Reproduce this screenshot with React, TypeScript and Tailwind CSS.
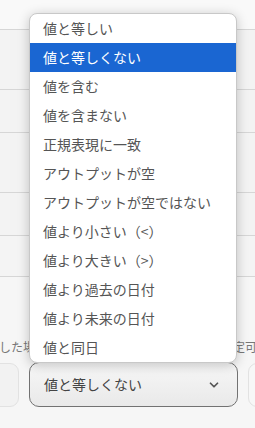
import { ChevronDown } from 'lucide-react';

const options = [
  '値と等しい',
  '値と等しくない',
  '値を含む',
  '値を含まない',
  '正規表現に一致',
  'アウトプットが空',
  'アウトプットが空ではない',
  '値より小さい（<）',
  '値より大きい（>）',
  '値より過去の日付',
  '値より未来の日付',
  '値と同日',
];

const selected = '値と等しくない';

export default function App() {
  return (
    <div
      className="relative w-[255px] h-[428px] overflow-hidden bg-[#f6f6f6] text-[#555]"
      style={{ fontFamily: '"Noto Sans CJK JP", "Noto Sans", sans-serif' }}
    >
      {/* table rows behind the menu */}
      <div className="flex flex-col">
        <div className="h-[30px] border-b border-[#d6d6d6] bg-[#f9f9f9]" />
        <div className="h-[60px] border-b border-[#d6d6d6] bg-[#f3f3f3]" />
        <div className="h-[43px] border-b border-[#d6d6d6] bg-[#f3f3f3]" />
        <div className="h-[60px] border-b border-[#d6d6d6] bg-[#f3f3f3]" />
        <div className="h-[43px] border-b border-[#d6d6d6] bg-[#f3f3f3]" />
        <div className="h-[41px] border-b border-[#d6d6d6] bg-[#f4f4f4]" />
      </div>

      {/* labels */}
      <div className="mt-[62px] flex justify-between text-[12px] leading-[16px] text-[#777]">
        <span className="-ml-[1px]">した場</span>
        <span className="mr-[-2px]">設定可</span>
      </div>

      {/* selects row */}
      <div className="mt-[7px] flex items-center gap-[10px]">
        <div className="-ml-[20px] h-[44px] w-[39px] shrink-0 rounded-[9px] border border-[#e2e2e2] bg-[#f2f2f2]" />
        <button className="flex h-[45px] w-[209px] shrink-0 items-center justify-between rounded-[10px] border border-[#727272] bg-gradient-to-b from-[#f7f7f7] to-[#e9e9e9] pl-[14px] pr-[16px] text-[14px] text-[#444]">
          <span>{selected}</span>
          <ChevronDown className="h-[14px] w-[14px] text-[#555]" strokeWidth={3} />
        </button>
        <div className="h-[44px] w-[40px] shrink-0 rounded-[9px] border border-[#e2e2e2] bg-[#f7f7f7]" />
      </div>

      {/* open menu */}
      <ul className="absolute left-[29px] top-[13px] w-[208px] overflow-hidden rounded-[8px] border border-[#c8c8c8] bg-white shadow-[0_2px_12px_rgba(0,0,0,0.22)]">
        {options.map((o) => (
          <li
            key={o}
            className={
              o === selected
                ? 'flex h-[29px] items-center bg-[#1a66d2] pl-[13px] text-[14px] text-white'
                : 'flex h-[29px] items-center pl-[13px] text-[14px] text-[#555]'
            }
          >
            {o}
          </li>
        ))}
      </ul>
    </div>
  );
}
